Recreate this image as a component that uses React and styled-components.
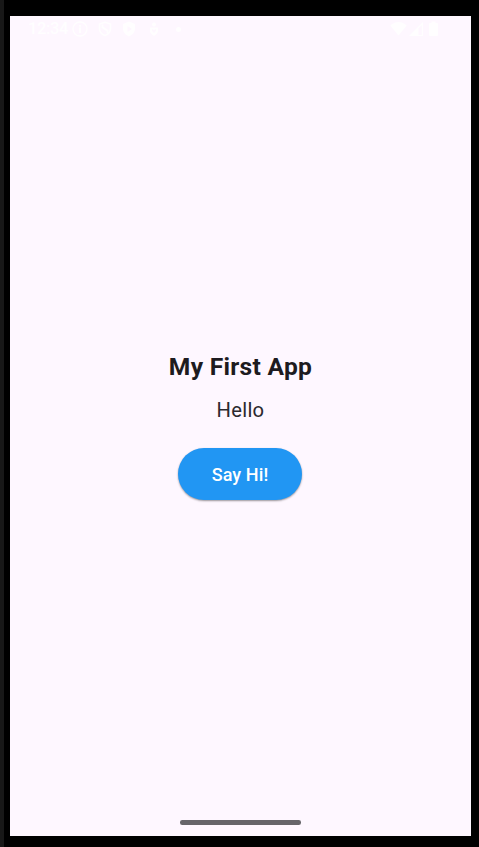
import React from "react";
import styled, { createGlobalStyle } from "styled-components";

const GlobalStyle = createGlobalStyle`
  * { box-sizing: border-box; }
  body { margin: 0; background: #000; }
`;

const Device = styled.div`
  display: flex;
  width: 479px;
  height: 847px;
  padding: 16px 8px 11px 6px;
  background: #000;
  border-left: 4px solid #181818;
  font-family: Roboto, sans-serif;
`;

const Screen = styled.div`
  display: flex;
  flex-direction: column;
  width: 461px;
  height: 820px;
  background: #fef7ff;
  color: #1d1b20;
`;

const StatusBar = styled.header`
  display: flex;
  align-items: center;
  justify-content: space-between;
  height: 26px;
  padding: 0 30px 0 18px;
  color: #fffeff;
`;

const StatusGroup = styled.div`
  display: flex;
  align-items: center;
  gap: ${(p) => p.$gap}px;
`;

const Clock = styled.span`
  width: 40px;
  margin-right: -4.5px;
  font-size: 16.5px;
  font-weight: 500;
  line-height: 20px;
  letter-spacing: -0.4px;
  white-space: nowrap;
`;

const Glyph = styled.svg`
  display: block;
  flex: none;
`;

const Content = styled.main`
  display: flex;
  flex: 1;
  flex-direction: column;
  align-items: center;
  padding-top: 307px;
`;

const Title = styled.h1`
  margin: 0;
  font-size: 24.6px;
  font-weight: 700;
  line-height: 35px;
  letter-spacing: 0.28px;
`;

const Message = styled.p`
  margin: 12px 0 0;
  color: #2b292e;
  font-size: 20.2px;
  line-height: 29px;
  letter-spacing: 0.28px;
`;

const Button = styled.button`
  width: 124px;
  height: 52px;
  margin: 23px 1px 0 0;
  padding: 1px 0 0;
  border: 0;
  border-radius: 26px;
  background: #2196f3;
  color: #fff;
  font: 500 18px/26px Roboto, sans-serif;
  letter-spacing: 0.11px;
  box-shadow: 0 1px 2px rgba(0, 0, 0, 0.4);
`;

const NavigationBar = styled.footer`
  display: flex;
  justify-content: center;
  height: 16px;
`;

const Handle = styled.div`
  width: 121px;
  height: 4.5px;
  border-radius: 2.25px;
  background: #67656a;
`;

function StatusIcons() {
  return (
    <StatusGroup $gap={8.5}>
      <Clock>12:34</Clock>
      <Glyph width="16" height="16" viewBox="0 0 16 16" fill="none" stroke="currentColor">
        <circle cx="8" cy="8" r="7" strokeWidth="1.3" />
        <path d="M6.8 7.4H8V12M8 4v1.8" strokeWidth="1.8" />
      </Glyph>
      <Glyph width="16" height="16" viewBox="0 0 16 16" fill="none" stroke="currentColor">
        <path d="M8 1.3 13.5 3v4.5c0 3.2-2.2 5.8-5.5 7-3.3-1.2-5.5-3.8-5.5-7V3Z" strokeWidth="1.6" />
        <path d="M5.5 3.5v2.7l5 3.6v2.7" strokeWidth="1.8" />
      </Glyph>
      <Glyph width="16" height="16" viewBox="0 0 16 16" fill="currentColor">
        <path fillRule="evenodd" d="M8 .5 14 3v4.5c0 3.5-2.4 6.5-6 8-3.6-1.5-6-4.5-6-8V3ZM6.5 5v6l4.5-3Z" />
      </Glyph>
      <Glyph width="16" height="16" viewBox="0 0 16 16" fill="currentColor">
        <circle cx="8" cy="3.5" r="2" />
        <path fillRule="evenodd" d="M4 6.5h8V10c0 2-1.5 3.2-4 5-2.5-1.8-4-3-4-5ZM8 9C5.5 7 4.8 9.3 8 12 11.2 9.3 10.5 7 8 9Z" />
      </Glyph>
      <Glyph width="16" height="16" viewBox="0 0 16 16" fill="currentColor">
        <circle cx="8.5" cy="8.5" r="2.5" />
      </Glyph>
    </StatusGroup>
  );
}

function SystemIcons() {
  return (
    <StatusGroup $gap={2}>
      <Glyph width="17" height="16" viewBox="0 0 17 16" fill="currentColor">
        <path d="M.3 4.5C5-.2 12-.2 16.7 4.5L8.5 14.5Z" />
      </Glyph>
      <Glyph width="14" height="16" viewBox="0 0 14 16" fill="currentColor">
        <path fillRule="evenodd" d="m0 15 14-14v14ZM9.5 7.2V14H12.8V4Z" />
      </Glyph>
      <Glyph width="16" height="16" viewBox="0 0 16 16" fill="currentColor">
        <path d="M6.5 2V.5h4V2H12a1 1 0 0 1 1 1v11a1 1 0 0 1-1 1H5a1 1 0 0 1-1-1V3a1 1 0 0 1 1-1Z" />
      </Glyph>
    </StatusGroup>
  );
}

export default function App() {
  return (
    <>
      <GlobalStyle />
      <Device>
        <Screen>
          <StatusBar>
            <StatusIcons />
            <SystemIcons />
          </StatusBar>
          <Content>
            <Title>My First App</Title>
            <Message>Hello</Message>
            <Button type="button">Say Hi!</Button>
          </Content>
          <NavigationBar>
            <Handle />
          </NavigationBar>
        </Screen>
      </Device>
    </>
  );
}
